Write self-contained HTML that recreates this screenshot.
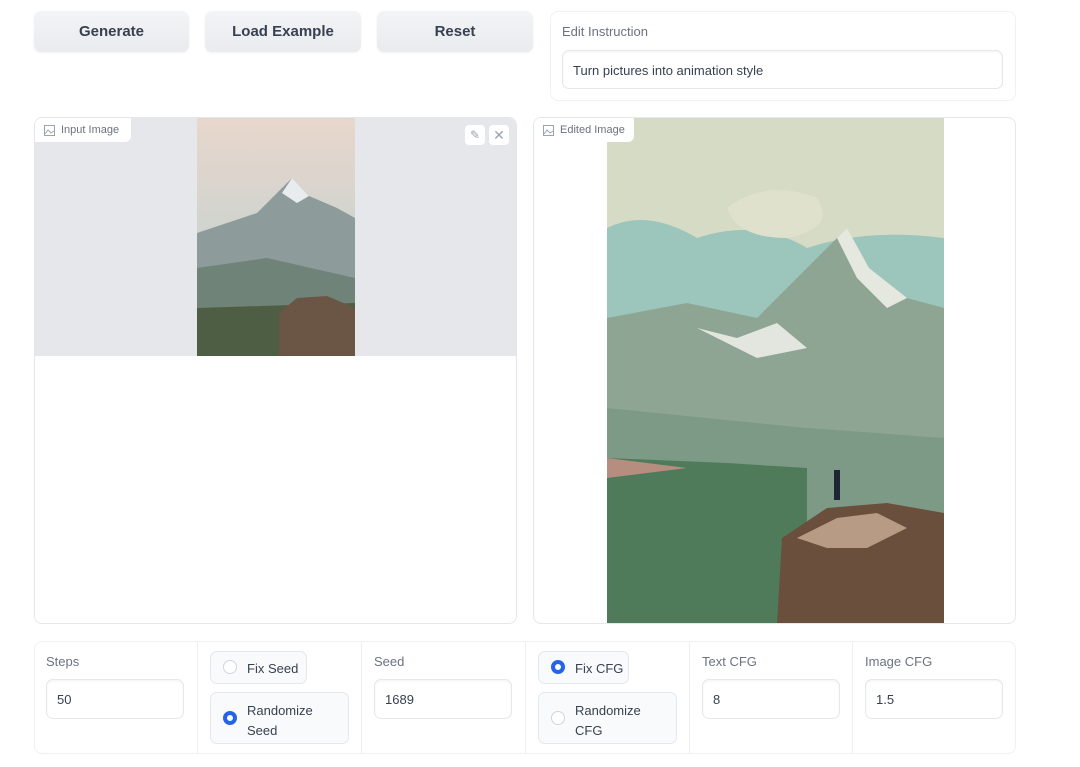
<!DOCTYPE html>
<html><head><style>
body{margin:0;width:1080px;height:767px;background:#fff;font-family:"Liberation Sans",sans-serif;position:relative;overflow:hidden}
.a{position:absolute;box-sizing:border-box}
.btn{background:linear-gradient(#f3f4f6,#e9ebee);border-radius:7px;top:11px;height:41px;font-weight:bold;font-size:15px;color:#374151;text-align:center;line-height:41px;box-shadow:0 1px 2px rgba(0,0,0,.06)}
.lbl{font-size:13px;color:#6b7280}
.inp{border:1px solid #e5e7eb;border-radius:7px;background:#fff;font-size:13px;color:#374151;padding-left:10px;box-shadow:0 1px 2px rgba(0,0,0,.05) inset}
.panel{border:1px solid #e5e7eb;border-radius:8px;background:#fff}
.tag{background:#fff;font-size:11px;color:#6b7280;border-radius:0 0 6px 0;height:24px;line-height:24px;padding-left:26px}
.rb{border:1px solid #e5e7eb;border-radius:7px;background:#f9fafb;font-size:13px;color:#374151}
.r{position:absolute;width:14px;height:14px;border-radius:50%;border:1px solid #d1d5db;background:#fff;box-sizing:border-box}
.r.on{border:4px solid #2563eb}
</style></head><body>
<div class="a btn" style="left:34px;width:155px">Generate</div>
<div class="a btn" style="left:205px;width:156px">Load Example</div>
<div class="a btn" style="left:377px;width:156px">Reset</div>
<div class="a panel" style="left:550px;top:11px;width:466px;height:90px;border-color:#f0f1f3"></div>
<div class="a lbl" style="left:562px;top:24px">Edit Instruction</div>
<div class="a inp" style="left:562px;top:50px;width:441px;height:39px;line-height:39px">Turn pictures into animation style</div>

<div class="a panel" style="left:34px;top:117px;width:483px;height:507px;overflow:hidden">
 <div class="a" style="left:0;top:0;width:483px;height:238px;background:#e5e7eb"></div>
 <svg class="a" style="left:162px;top:0" width="158" height="238" viewBox="0 0 158 238">
  <defs><linearGradient id="s1" x1="0" y1="0" x2="0" y2="1"><stop offset="0" stop-color="#e8d7cc"/><stop offset=".5" stop-color="#cfd3cf"/><stop offset="1" stop-color="#a9b5b3"/></linearGradient></defs>
  <rect width="158" height="238" fill="url(#s1)"/>
  <path d="M0 115 L60 95 L95 60 L112 78 L140 90 L158 100 L158 238 L0 238Z" fill="#8d9c9a"/>
  <path d="M85 75 L95 60 L112 78 L100 85Z" fill="#e8ecee"/>
  <path d="M0 150 L70 140 L158 160 L158 238 L0 238Z" fill="#6f8378"/>
  <path d="M0 190 L158 185 L158 238 L0 238Z" fill="#4d5e45"/>
  <path d="M82 238 L82 195 L100 180 L130 178 L158 190 L158 238Z" fill="#6b5646"/>
 </svg>
 <div class="a tag" style="left:0;top:0;width:96px">Input Image</div>
 <svg class="a" style="left:9px;top:7px" width="11" height="11"><rect x=".5" y=".5" width="10" height="10" fill="none" stroke="#9ca3af"/><path d="M1 9 L4 5 L7 8 L10 6" fill="none" stroke="#9ca3af"/></svg>
 <div class="a" style="left:430px;top:7px;width:20px;height:20px;background:#fff;border-radius:4px;color:#9ca3af;font-size:12px;text-align:center;line-height:20px">✎</div>
 <div class="a" style="left:454px;top:7px;width:20px;height:20px;background:#fff;border-radius:4px;color:#9ca3af;font-size:14px;text-align:center;line-height:20px">✕</div>
</div>

<div class="a panel" style="left:533px;top:117px;width:483px;height:507px;overflow:hidden">
 <svg class="a" style="left:73px;top:0" width="337" height="506" viewBox="0 0 337 506">
  <rect width="337" height="506" fill="#d6dbc6"/>
  <path d="M0 110 Q40 90 90 120 Q150 100 200 130 Q260 110 337 120 L337 200 L0 200Z" fill="#9cc5bb"/>
  <path d="M120 90 Q160 60 210 80 Q230 110 180 120 Q130 120 120 90Z" fill="#dfe1cc"/>
  <path d="M0 200 L80 185 L150 200 L200 150 L240 110 L265 160 L300 180 L337 190 L337 506 L0 506Z" fill="#8fa594"/>
  <path d="M230 120 L240 110 L262 150 L300 180 L280 190 L250 160Z" fill="#e4e8df"/>
  <path d="M90 210 L130 220 L170 205 L200 230 L150 240Z" fill="#e2e6de"/>
  <path d="M0 290 L100 300 L200 310 L337 320 L337 506 L0 506Z" fill="#7d9a86"/>
  <path d="M0 340 L120 345 L200 350 L200 506 L0 506Z" fill="#4f7b5a"/>
  <path d="M0 340 L80 350 L0 360Z" fill="#b58e80"/>
  <path d="M170 506 L175 420 L220 390 L280 385 L337 395 L337 506Z" fill="#6a503c"/>
  <path d="M190 420 L230 400 L270 395 L300 410 L260 430 L220 430Z" fill="#b89b84"/>
  <rect x="227" y="352" width="6" height="30" fill="#1e2635"/>
 </svg>
 <div class="a tag" style="left:0;top:0;width:100px">Edited Image</div>
 <svg class="a" style="left:9px;top:7px" width="11" height="11"><rect x=".5" y=".5" width="10" height="10" fill="none" stroke="#9ca3af"/><path d="M1 9 L4 5 L7 8 L10 6" fill="none" stroke="#9ca3af"/></svg>
</div>

<div class="a panel" style="left:34px;top:641px;width:982px;height:113px;border-color:#eef0f2"></div>
<div class="a" style="left:197px;top:641px;width:1px;height:113px;background:#eceef1"></div>
<div class="a" style="left:361px;top:641px;width:1px;height:113px;background:#eceef1"></div>
<div class="a" style="left:525px;top:641px;width:1px;height:113px;background:#eceef1"></div>
<div class="a" style="left:689px;top:641px;width:1px;height:113px;background:#eceef1"></div>
<div class="a" style="left:852px;top:641px;width:1px;height:113px;background:#eceef1"></div>

<div class="a lbl" style="left:46px;top:654px">Steps</div>
<div class="a inp" style="left:46px;top:679px;width:138px;height:40px;line-height:40px">50</div>
<div class="a rb" style="left:210px;top:651px;width:97px;height:33px;line-height:33px;padding-left:36px">Fix Seed</div>
<div class="r" style="left:223px;top:660px"></div>
<div class="a rb" style="left:210px;top:692px;width:139px;height:52px;padding:8px 0 0 36px;line-height:20px">Randomize<br>Seed</div>
<div class="r on" style="left:223px;top:711px"></div>
<div class="a lbl" style="left:374px;top:654px">Seed</div>
<div class="a inp" style="left:374px;top:679px;width:138px;height:40px;line-height:40px">1689</div>
<div class="a rb" style="left:538px;top:651px;width:91px;height:33px;line-height:33px;padding-left:36px">Fix CFG</div>
<div class="r on" style="left:551px;top:660px"></div>
<div class="a rb" style="left:538px;top:692px;width:139px;height:52px;padding:8px 0 0 36px;line-height:20px">Randomize<br>CFG</div>
<div class="r" style="left:551px;top:711px"></div>
<div class="a lbl" style="left:702px;top:654px">Text CFG</div>
<div class="a inp" style="left:702px;top:679px;width:138px;height:40px;line-height:40px">8</div>
<div class="a lbl" style="left:865px;top:654px">Image CFG</div>
<div class="a inp" style="left:865px;top:679px;width:138px;height:40px;line-height:40px">1.5</div>
</body></html>
